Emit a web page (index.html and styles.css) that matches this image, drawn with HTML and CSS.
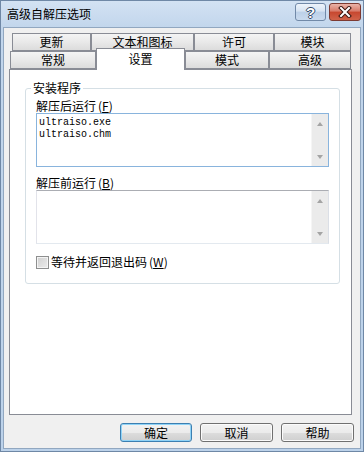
FILE: index.html
```html
<!DOCTYPE html>
<html lang="zh-CN">
<head>
    <meta charset="UTF-8">
    <title>高级自解压选项</title>
    <link rel="stylesheet" href="styles.css">
</head>
<body>
    <div class="window">
        <div class="titlebar">
            <span class="title">高级自解压选项</span>
            <div class="caption-btns">
                <span class="cap cap-help">?</span>
                <span class="cap cap-close">
                    <svg width="14" height="12" viewBox="0 0 14 12">
                        <path d="M3 2 L11 10 M11 2 L3 10" stroke="#3a1410" stroke-width="4" stroke-linecap="square"/>
                        <path d="M3 2 L11 10 M11 2 L3 10" stroke="#fff" stroke-width="2" stroke-linecap="square"/>
                    </svg>
                </span>
            </div>
        </div>
        <div class="client">
            <div class="tabs">
                <div class="tabrow back">
                    <div class="tab t-update">更新</div>
                    <div class="tab t-text">文本和图标</div>
                    <div class="tab t-license">许可</div>
                    <div class="tab t-module">模块</div>
                </div>
                <div class="tabrow front">
                    <div class="tab t-general">常规</div>
                    <div class="tab t-setup sel">设置</div>
                    <div class="tab t-mode">模式</div>
                    <div class="tab t-adv">高级</div>
                </div>
            </div>
            <div class="panel">
                <fieldset class="group">
                    <legend>安装程序</legend>
                    <div class="label">解压后运行<span class="key">(<u>F</u>)</span></div>
                    <div class="edit focus">
                        <div class="edit-text">ultraiso.exe<br>ultraiso.chm</div>
                        <div class="vscroll"><span class="arr up"></span><span class="arr down"></span></div>
                    </div>
                    <div class="label gap">解压前运行<span class="key">(<u>B</u>)</span></div>
                    <div class="edit">
                        <div class="edit-text"></div>
                        <div class="vscroll"><span class="arr up"></span><span class="arr down"></span></div>
                    </div>
                    <label class="check"><span class="box"></span>等待并返回退出码<span class="key">(<u>W</u>)</span></label>
                </fieldset>
            </div>
            <div class="buttons">
                <button class="btn default">确定</button>
                <button class="btn wide">取消</button>
                <button class="btn wide">帮助</button>
            </div>
        </div>
    </div>
</body>
</html>
```
FILE: styles.css
```css
body{margin:0; font:12px/14px "Noto Sans CJK SC", "Noto Sans", sans-serif; color:#000;}

.window{width:364px; height:452px; box-sizing:border-box; border:1px solid #6f88a6; padding:0 2px 2px;
background:linear-gradient(#d3e2f3, #c2d6ec 26px, #bcd2ea); display:flex; flex-direction:column;}

.titlebar{height:26px; display:flex; justify-content:space-between; align-items:flex-start;}
.title{padding:6px 0 0 4px; line-height:14px;}
.caption-btns{display:flex; gap:3px; margin-top:2px;}
.cap{height:18px; box-sizing:border-box; border-radius:3px; display:flex; align-items:center; justify-content:center;}
.cap-help{width:31px; border:1px solid #7189a8; background:linear-gradient(#eef4fb, #d6e3f2 45%, #bcd0e8 50%, #c9daee);
color:#fff; font:bold 15px/15px "Liberation Sans", sans-serif;
text-shadow:1px 0 #354a66, -1px 0 #354a66, 0 1px #354a66, 0 -1px #354a66;}
.cap-close{width:32px; border:1px solid #7d3a32; background:linear-gradient(#eab3a8, #d87a69 45%, #c7472f 50%, #d0634a);}

.client{flex:1; background:#f0f0f0; border:1px solid #91a7c0;}

.tabs{margin-top:5px;}
.tabrow{display:flex; height:18px; align-items:flex-start;}
.tabrow.back{margin-left:8px;}
.tabrow.front{margin-left:6px;}
.tab{box-sizing:border-box; height:18px; border:1px solid #898c95; display:flex; align-items:center; justify-content:center;
background:linear-gradient(#f4f4f4, #e9e9e9 50%, #dcdcdc);}
.tab.sel{height:22px; margin-top:-3px; border-bottom:none; background:#fff; padding-bottom:1px; position:relative; z-index:1;}
.t-update{width:79px;}
.t-text{width:103px;}
.t-license{width:80px;}
.t-module{width:77px;}
.t-general{width:86px;}
.t-setup{width:89px;}
.t-mode{width:84px;}
.t-adv{width:82px;}

.panel{margin-left:5px; width:343px; height:346px; box-sizing:border-box; border:1px solid #898c95; background:#fff;
padding:11px 0 0 15px;}

.group{margin:0; width:315px; box-sizing:border-box; border:1px solid #d5dfe5; border-radius:3px; padding:4px 10px 14px;}
.group legend{margin-left:-5px; padding:0 2px; line-height:14px;}

.label{line-height:14px; height:14px;}
.label.gap{margin-top:9px;}
.key{margin-left:2px;}

.edit{display:flex; height:54px; box-sizing:border-box; border:1px solid #abadb3; border-color:#abadb3 #dbdfe6 #e3e9ef #e2e3ea;}
.edit.focus{border-color:#89b4dd;}
.edit-text{flex:1; padding:3px 2px; font:10px/12px "Liberation Mono", monospace;}
.vscroll{width:17px; box-sizing:border-box; background:#ebebeb; border-left:1px solid #f5f5f5; display:flex; flex-direction:column;
align-items:center; justify-content:space-between; padding:8px 0 7px;}
.arr{width:0; height:0; border-left:3px solid transparent; border-right:3px solid transparent;}
.arr.up{border-bottom:4px solid #a4a4a4;}
.arr.down{border-top:4px solid #a4a4a4;}

.check{display:flex; align-items:center; margin-top:11px; line-height:14px;}
.box{width:13px; height:13px; box-sizing:border-box; border:1px solid #8e8f8f; margin-right:2px;
background:linear-gradient(135deg, #d0d0d0, #ececec); box-shadow:inset 0 0 0 1px #f4f4f4;}

.buttons{display:flex; justify-content:flex-end; gap:8px; margin-top:8px; padding-right:6px;}
.btn{width:72px; height:19px; box-sizing:border-box; border:1px solid #707070; border-radius:3px; padding:0;
font:12px/14px "Noto Sans CJK SC", "Noto Sans", sans-serif; color:#000;
background:linear-gradient(#f2f2f2, #ebebeb 50%, #dddddd 51%, #cfcfcf); box-shadow:inset 0 0 0 1px #fbfbfb;}
.btn.wide{width:73px;}
.btn.default{border-color:#3c7fb1; box-shadow:inset 0 0 0 1px #8fd3f7;}
```
